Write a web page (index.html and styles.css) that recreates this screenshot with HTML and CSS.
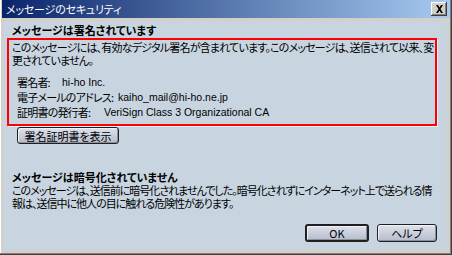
FILE: index.html
```html
<!DOCTYPE html>
<html lang="ja">
<head>
<meta charset="utf-8">
<link rel="stylesheet" href="styles.css">
</head>
<body>
<div class="window">
  <div class="titlebar">
    <span class="title">メッセージのセキュリティ</span>
    <span class="close"><svg width="9" height="8" viewBox="0 0 9 8"><path d="M1 0h2l1.5 2.5L6 0h2L5.5 4 8 8H6L4.5 5.5 3 8H1l2.5-4z" fill="#000"/></svg></span>
  </div>
  <div class="client">
    <div class="heading h1">メッセージは署名されています</div>
    <div class="redbox">
      <p class="para">このメッセージには、有効なデジタル署名が含まれています。このメッセージは、送信されて以来、変<br>更されていません。</p>
      <div class="rows">
        <div class="row"><span class="lbl l1">署名者:</span><span class="val">hi-ho Inc.</span></div>
        <div class="row"><span class="lbl l2">電子メールのアドレス:</span><span class="val">kaiho_mail@hi-ho.ne.jp</span></div>
        <div class="row"><span class="lbl l3">証明書の発行者:</span><span class="val">VeriSign Class 3 Organizational CA</span></div>
      </div>
    </div>
    <div class="btnrow"><button class="btn certbtn">署名証明書を表示</button></div>
    <div class="heading h2">メッセージは暗号化されていません</div>
    <p class="para p2">このメッセージは、送信前に暗号化されませんでした。暗号化されずにインターネット上で送られる情<br>報は、送信中に他人の目に触れる危険性があります。</p>
    <div class="footer">
      <button class="btn okbtn">OK</button>
      <button class="btn helpbtn">ヘルプ</button>
    </div>
  </div>
</div>
</body>
</html>
```
FILE: styles.css
```css
html, body {
  margin: 0;
  padding: 0;
  background: #d4d0c8;
}
.window {
  width: 452px;
  height: 255px;
  box-sizing: border-box;
  padding: 0 5px 5px 3px;
  background: #d4d0c8;
  box-shadow: inset -1px -1px #404040, inset -2px -2px #808080, inset 1px 0 #ffffff;
  display: flex;
  flex-direction: column;
  font-family: "Noto Sans CJK JP", sans-serif;
  font-size: 11px;
  color: #000;
}
.titlebar {
  height: 18px;
  margin: 0 -3px 0 -1px;
  background: linear-gradient(to right, #0a246a, #a6caf0);
  display: flex;
  align-items: center;
  justify-content: space-between;
  padding: 0 3px 0 4px;
}
.title {
  color: #fff;
  font-size: 11px;
  font-feature-settings: "palt";
  letter-spacing: -0.2px;
  line-height: 18px;
}
.close {
  width: 16px;
  height: 14px;
  box-sizing: border-box;
  background: #d4d0c8;
  box-shadow: inset -1px -1px #404040, inset 1px 1px #ffffff, inset -2px -2px #808080;
  display: flex;
  align-items: center;
  justify-content: center;
}
.client {
  flex: 1;
  margin-top: 3px;
  background: #c8d5e1;
  padding: 2px 10px 0 4px;
  display: flex;
  flex-direction: column;
}
.heading {
  font-weight: bold;
  font-feature-settings: "palt";
  line-height: 13px;
  padding-left: 5px;
  white-space: nowrap;
}
.h1 {
  margin-top: 1px;
}
.redbox {
  margin-top: 1px;
  border: 2px solid #ff0000;
  box-shadow: 1px 1px 0 #e8f0ff;
  padding: 1px 3px 4px 3px;
}
.para {
  margin: 0;
  line-height: 13px;
  white-space: nowrap;
  font-feature-settings: "palt";
  letter-spacing: -0.8px;
}
.rows {
  margin-top: 8px;
  padding-left: 5px;
}
.row {
  line-height: 15px;
  white-space: nowrap;
  display: flex;
}
.lbl {
  font-feature-settings: "palt";
  letter-spacing: -0.8px;
  flex: none;
}
.l1 { width: 45px; }
.l2 { width: 101px; }
.l3 { width: 87px; }
.val {
  font-family: "Liberation Sans", Arial, sans-serif;
  font-size: 10.5px;
}
.btnrow {
  padding-left: 10px;
  margin-top: 1px;
}
.btn {
  font-family: "Noto Sans CJK JP", sans-serif;
  font-size: 11px;
  font-feature-settings: "palt";
  background: linear-gradient(#dde2ec, #b6bccb);
  border: 1px solid #202020;
  border-radius: 3px;
  padding: 0;
  height: 17px;
  line-height: 14px;
  color: #000;
  box-shadow: inset 1px 1px #f0f2f8, inset -1px -1px #8a90a0;
}
.certbtn {
  width: 102px;
}
.h2 {
  margin-top: 27px;
}
.p2 {
  padding-left: 5px;
  letter-spacing: -1px;
}
.footer {
  margin-top: auto;
  margin-bottom: 8px;
  display: flex;
  justify-content: flex-end;
  gap: 8px;
}
.okbtn {
  width: 64px;
  height: 18px;
  border-width: 2px;
}
.helpbtn {
  width: 60px;
  height: 18px;
}
```
